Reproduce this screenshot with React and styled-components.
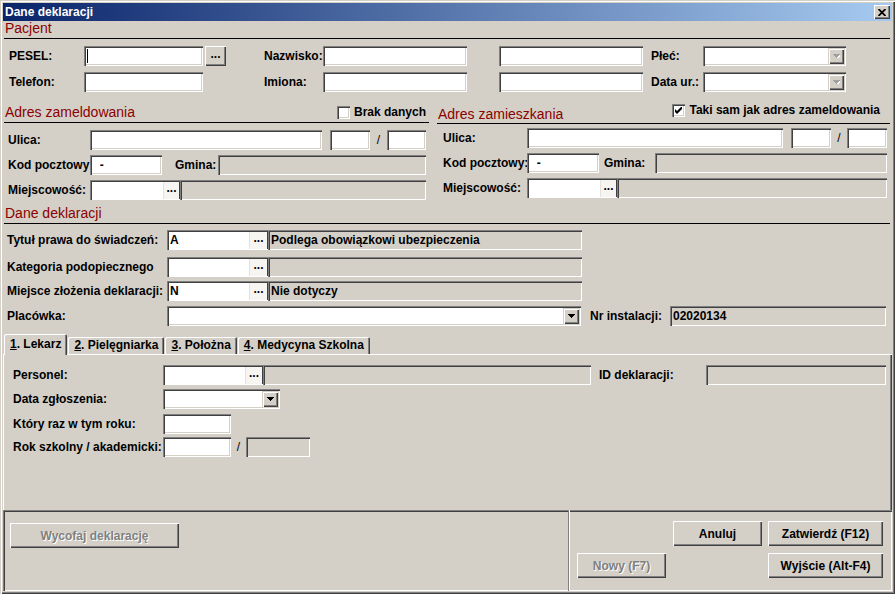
import React from 'react'
import styled, { createGlobalStyle } from 'styled-components'

const face = '#d4d0c8'
const sunken = 'inset 1px 1px #808080, inset 2px 2px #404040, inset -1px -1px #ffffff, inset -2px -2px #d4d0c8'
const raised = 'inset 1px 1px #ffffff, inset -1px -1px #404040, inset -2px -2px #808080'
const raisedSmall = 'inset 1px 1px #d4d0c8, inset 2px 2px #ffffff, inset -1px -1px #404040, inset -2px -2px #808080'

const GlobalStyle = createGlobalStyle`
  html, body { margin: 0; padding: 0; background: ${face}; }
  body { font-family: "Liberation Sans", Arial, sans-serif; }
`

const Window = styled.div`
  width: 895px;
  height: 594px;
  box-sizing: border-box;
  padding: 3px;
  background: ${face};
  box-shadow: inset 1px 1px #d4d0c8, inset 2px 2px #ffffff, inset -1px -1px #404040, inset -2px -2px #808080;
  display: flex;
  flex-direction: column;
  font: bold 12px "Liberation Sans", Arial, sans-serif;
  color: #000;
  overflow: hidden;
`

const TitleBar = styled.div`
  height: 18px;
  flex-shrink: 0;
  display: flex;
  align-items: center;
  justify-content: space-between;
  padding: 0 2px;
  background: linear-gradient(to right, #0a246a, #a6caf0);
  color: #fff;
`

const CloseBtn = styled.div`
  width: 16px;
  height: 14px;
  background: ${face};
  box-shadow: ${raised};
  display: flex;
  align-items: center;
  justify-content: center;
`

const SectionHead = styled.div`
  display: flex;
  align-items: flex-end;
  justify-content: space-between;
  height: ${p => p.$h}px;
  margin: ${p => p.$mt || 0}px 2px 0 1px;
  border-bottom: 1px solid #000;
  flex-shrink: 0;
`

const SectionTitle = styled.span`
  color: #8b0000;
  font: 14px "Liberation Sans", Arial, sans-serif;
  line-height: 16px;
  padding: 0 0 ${p => p.$pb ?? 1}px 1px;
`

const CheckGroup = styled.div`
  align-self: flex-start;
  margin-top: ${p => p.$mt}px;
  margin-right: ${p => p.$mr}px;
  display: flex;
  align-items: center;
  gap: 4px;
  line-height: 13px;
`

const CheckBox = styled.div`
  width: 13px;
  height: 13px;
  box-sizing: border-box;
  background: #fff;
  box-shadow: ${sunken};
  display: flex;
  align-items: center;
  justify-content: center;
`

const Rows = styled.div`
  display: flex;
  flex-direction: column;
  gap: ${p => p.$gap || 0}px;
  padding: ${p => p.$pt}px 0 0 ${p => p.$pl}px;
`

const Row = styled.div`
  display: flex;
  align-items: center;
  height: 20px;
  margin-top: ${p => p.$mt || 0}px;
`

const Label = styled.div`
  width: ${p => p.$w}px;
  margin-left: ${p => p.$ml || 0}px;
  flex-shrink: 0;
  white-space: nowrap;
  line-height: 20px;
`

const Slash = styled.div`
  width: ${p => p.$w}px;
  flex-shrink: 0;
  text-align: center;
  font-weight: normal;
`

const TextBox = styled.div`
  width: ${p => p.$w}px;
  margin-left: ${p => p.$ml || 0}px;
  height: 20px;
  box-sizing: border-box;
  flex-shrink: 0;
  padding: 0 3px;
  background: ${p => (p.$grey ? face : '#fff')};
  box-shadow: ${sunken};
  line-height: 19px;
  white-space: pre;
  overflow: hidden;
  display: flex;
  align-items: center;
`

const Caret = styled.span`
  width: 1px;
  height: 14px;
  background: #000;
`

const LookupBox = styled.div`
  width: ${p => p.$w}px;
  height: 20px;
  flex-shrink: 0;
  box-sizing: border-box;
  display: flex;
  padding: 2px 0 1px 2px;
  background: #fff;
  box-shadow: inset 1px 1px #808080, inset 2px 2px #404040, inset 0 -1px #ffffff;
`

const LookupText = styled.div`
  flex: 1;
  padding-left: 1px;
  line-height: 17px;
`

const Dots = styled.div`
  width: ${p => p.$w}px;
  box-sizing: border-box;
  border-left: 1px solid #e4e2dc;
  border-right: 1px solid #404040;
  background: #f6f5f2;
  text-align: center;
  line-height: 13px;
`

const DotsButton = styled.div`
  width: 21px;
  height: 20px;
  margin-left: 2px;
  flex-shrink: 0;
  box-sizing: border-box;
  background: ${face};
  box-shadow: ${raised};
  text-align: center;
  line-height: 16px;
`

const SelectBox = styled.div`
  width: ${p => p.$w}px;
  height: 20px;
  flex-shrink: 0;
  box-sizing: border-box;
  padding: 2px;
  display: flex;
  justify-content: flex-end;
  background: #fff;
  box-shadow: ${sunken};
`

const DropBtn = styled.div`
  width: 16px;
  height: 16px;
  background: ${face};
  box-shadow: ${raisedSmall};
  display: flex;
  align-items: center;
  justify-content: center;
`

const AddrWrap = styled.div`
  display: flex;
  align-items: flex-start;
  margin-top: 11px;
`

const AddrCol = styled.div`
  width: ${p => p.$w}px;
  margin-left: ${p => p.$ml}px;
  flex-shrink: 0;
`

const TabStrip = styled.div`
  display: flex;
  align-items: flex-end;
  gap: 1px;
  height: 20px;
  margin-top: 8px;
  padding-left: 1px;
  position: relative;
  z-index: 1;
`

const Tab = styled.div`
  height: ${p => (p.$active ? 21 : 17)}px;
  margin-bottom: ${p => (p.$active ? -1 : 0)}px;
  padding: 0 6px;
  box-sizing: border-box;
  background: ${face};
  border-radius: 2px 2px 0 0;
  box-shadow: inset 1px 1px #ffffff, inset -1px 0 #404040, inset -2px 0 #808080;
  line-height: ${p => (p.$active ? 20 : 17)}px;
  white-space: nowrap;
`

const TabPanel = styled.div`
  flex: 1;
  box-shadow: inset 1px 1px #ffffff, inset -1px 0 #404040, inset -2px 0 #808080;
`

const Footer = styled.div`
  height: 81px;
  flex-shrink: 0;
  box-sizing: border-box;
  display: flex;
  box-shadow: inset 1px 1px #808080, inset 2px 2px #404040, inset -1px -1px #ffffff;
`

const FooterLeft = styled.div`
  width: 565px;
  padding: 13px 0 0 7px;
  box-sizing: border-box;
`

const FooterRight = styled.div`
  flex: 1;
  border-left: 1px solid #808080;
  box-shadow: inset 1px 0 #ffffff;
  padding: 11px 0 0 8px;
  display: grid;
  grid-template-columns: 90px 89px 115px;
  grid-template-rows: 25px 25px;
  column-gap: 6px;
  row-gap: 7px;
  align-content: start;
`

const Button = styled.div`
  width: ${p => (p.$w ? `${p.$w}px` : 'auto')};
  height: 25px;
  box-sizing: border-box;
  grid-column: ${p => p.$col || 'auto'};
  grid-row: ${p => p.$row || 'auto'};
  background: ${face};
  box-shadow: ${raised};
  display: flex;
  align-items: center;
  justify-content: center;
  color: ${p => (p.$disabled ? '#808080' : '#000')};
  text-shadow: ${p => (p.$disabled ? '1px 1px #ffffff' : 'none')};
`

const Arrow = ({ disabled }) => (
  <svg width="7" height="4" viewBox="0 0 7 4" shapeRendering="crispEdges">
    {disabled && <polygon points="1,1 8,1 4.5,5" fill="#fff" />}
    <polygon points="0,0 7,0 3.5,4" fill={disabled ? '#a0a0a0' : '#000'} />
  </svg>
)

const Select = ({ w, disabled }) => (
  <SelectBox $w={w}>
    <DropBtn>
      <Arrow disabled={disabled} />
    </DropBtn>
  </SelectBox>
)

const Lookup = ({ w, dots, value, rest }) => (
  <>
    <LookupBox $w={w}>
      <LookupText>{value}</LookupText>
      <Dots $w={dots}>...</Dots>
    </LookupBox>
    <TextBox $grey $w={rest}>{rest ? '' : ''}</TextBox>
  </>
)

const Check = ({ checked }) => (
  <CheckBox>
    {checked && (
      <svg width="7" height="7" viewBox="0 0 7 7">
        <polygon points="0,2 2,4 7,-1 7,2 2,7 0,5" fill="#000" />
      </svg>
    )}
  </CheckBox>
)

export default function App() {
  return (
    <>
      <GlobalStyle />
      <Window>
        <TitleBar>
          <span>Dane deklaracji</span>
          <CloseBtn>
            <svg width="8" height="7" viewBox="0 0 8 7">
              <path d="M0.5 0 L7.5 7 M7.5 0 L0.5 7" stroke="#000" strokeWidth="1.8" />
            </svg>
          </CloseBtn>
        </TitleBar>

        <SectionHead $h={17}>
          <SectionTitle $pb={2}>Pacjent</SectionTitle>
        </SectionHead>
        <Rows $pt={7} $pl={6} $gap={6}>
          <Row>
            <Label $w={75}>PESEL:</Label>
            <TextBox $w={119}><Caret /></TextBox>
            <DotsButton>...</DotsButton>
            <Label $w={59} $ml={38}>Nazwisko:</Label>
            <TextBox $w={144} />
            <TextBox $w={144} $ml={32} />
            <Label $w={52} $ml={8}>Płeć:</Label>
            <Select w={143} disabled />
          </Row>
          <Row>
            <Label $w={75}>Telefon:</Label>
            <TextBox $w={119} />
            <Label $w={59} $ml={61}>Imiona:</Label>
            <TextBox $w={144} />
            <TextBox $w={144} $ml={32} />
            <Label $w={52} $ml={8}>Data ur.:</Label>
            <Select w={143} disabled />
          </Row>
        </Rows>

        <AddrWrap>
          <AddrCol $w={425} $ml={1}>
            <SectionHead $h={19} style={{ margin: 0 }}>
              <SectionTitle $pb={2}>Adres zameldowania</SectionTitle>
              <CheckGroup $mt={3} $mr={3}>
                <Check />
                <span>Brak danych</span>
              </CheckGroup>
            </SectionHead>
            <Rows $pt={7} $pl={4} $gap={5}>
              <Row>
                <Label $w={82}>Ulica:</Label>
                <TextBox $w={232} />
                <TextBox $w={40} $ml={8} />
                <Slash $w={17}>/</Slash>
                <TextBox $w={39} />
              </Row>
              <Row>
                <Label $w={82}>Kod pocztowy:</Label>
                <TextBox $w={72}>{'  -'}</TextBox>
                <Label $w={43} $ml={13}>Gmina:</Label>
                <TextBox $grey $w={208} />
              </Row>
              <Row>
                <Label $w={82}>Miejscowość:</Label>
                <Lookup w={90} dots={17} rest={246} />
              </Row>
            </Rows>
          </AddrCol>

          <AddrCol $w={453} $ml={8}>
            <SectionHead $h={20} style={{ margin: 0 }}>
              <SectionTitle $pb={1}>Adres zamieszkania</SectionTitle>
              <CheckGroup $mt={1} $mr={10}>
                <Check checked />
                <span>Taki sam jak adres zameldowania</span>
              </CheckGroup>
            </SectionHead>
            <Rows $pt={4} $pl={6} $gap={5}>
              <Row>
                <Label $w={84}>Ulica:</Label>
                <TextBox $w={256} />
                <TextBox $w={40} $ml={8} />
                <Slash $w={16}>/</Slash>
                <TextBox $w={40} />
              </Row>
              <Row>
                <Label $w={84}>Kod pocztowy:</Label>
                <TextBox $w={72}>{'  -'}</TextBox>
                <Label $w={51} $ml={5}>Gmina:</Label>
                <TextBox $grey $w={232} />
              </Row>
              <Row>
                <Label $w={84}>Miejscowość:</Label>
                <Lookup w={90} dots={17} rest={270} />
              </Row>
            </Rows>
          </AddrCol>
        </AddrWrap>

        <SectionHead $h={18} $mt={5}>
          <SectionTitle $pb={2}>Dane deklaracji</SectionTitle>
        </SectionHead>
        <Rows $pt={6} $pl={4}>
          <Row>
            <Label $w={160}>Tytuł prawa do świadczeń:</Label>
            <LookupBox $w={101}>
              <LookupText>A</LookupText>
              <Dots $w={19}>...</Dots>
            </LookupBox>
            <TextBox $grey $w={314}>Podlega obowiązkowi ubezpieczenia</TextBox>
          </Row>
          <Row $mt={7}>
            <Label $w={160}>Kategoria podopiecznego</Label>
            <Lookup w={101} dots={19} rest={314} />
          </Row>
          <Row $mt={4}>
            <Label $w={160}>Miejsce złożenia deklaracji:</Label>
            <LookupBox $w={101}>
              <LookupText>N</LookupText>
              <Dots $w={19}>...</Dots>
            </LookupBox>
            <TextBox $grey $w={314}>Nie dotyczy</TextBox>
          </Row>
          <Row $mt={5}>
            <Label $w={160}>Placówka:</Label>
            <Select w={414} />
            <Label $w={80} $ml={9}>Nr instalacji:</Label>
            <TextBox $grey $w={216}>02020134</TextBox>
          </Row>
        </Rows>

        <TabStrip>
          <Tab $active><u>1</u>. Lekarz</Tab>
          <Tab><u>2</u>. Pielęgniarka</Tab>
          <Tab><u>3</u>. Położna</Tab>
          <Tab><u>4</u>. Medycyna Szkolna</Tab>
        </TabStrip>
        <TabPanel>
          <Rows $pt={11} $pl={10}>
            <Row>
              <Label $w={150}>Personel:</Label>
              <Lookup w={100} dots={18} rest={328} />
              <Label $w={107} $ml={8}>ID deklaracji:</Label>
              <TextBox $grey $w={180} />
            </Row>
            <Row $mt={4}>
              <Label $w={150}>Data zgłoszenia:</Label>
              <Select w={117} />
            </Row>
            <Row $mt={5}>
              <Label $w={150}>Który raz w tym roku:</Label>
              <TextBox $w={68} />
            </Row>
            <Row $mt={3}>
              <Label $w={150}>Rok szkolny / akademicki:</Label>
              <TextBox $w={68} />
              <Slash $w={15}>/</Slash>
              <TextBox $grey $w={64} />
            </Row>
          </Rows>
        </TabPanel>

        <Footer>
          <FooterLeft>
            <Button $w={169} $disabled>Wycofaj deklarację</Button>
          </FooterLeft>
          <FooterRight>
            <Button $w={89} $col={2} $row={1}>Anuluj</Button>
            <Button $w={115} $col={3} $row={1}>Zatwierdź (F12)</Button>
            <Button $w={89} $col={1} $row={2} $disabled>Nowy (F7)</Button>
            <Button $w={115} $col={3} $row={2}>Wyjście (Alt-F4)</Button>
          </FooterRight>
        </Footer>
      </Window>
    </>
  )
}
